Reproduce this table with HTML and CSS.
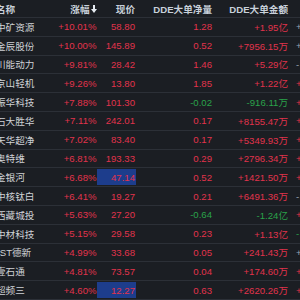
FILE: index.html
```html
<!DOCTYPE html>
<html lang="zh-CN">
<head>
<meta charset="utf-8">
<title>DDE</title>
<link rel="stylesheet" href="styles.css">
</head>
<body>
<div class="table">
  <div class="row head">
    <div class="c name">名称</div>
    <div class="c num">涨幅<svg class="arrow" viewBox="0 0 6 8" width="6" height="8"><path d="M2 0h2v4h2L3 8 0 4h2z" fill="#e6ecf2"/></svg></div>
    <div class="c num">现价</div>
    <div class="c num">DDE大单净量</div>
    <div class="c num">DDE大单金额</div>
    <div class="c more"></div>
  </div>
  <div class="row"><div class="c name">中矿资源</div><div class="c num up">+10.01%</div><div class="c num up">58.80</div><div class="c num up">1.28</div><div class="c num up">+1.95亿</div><div class="c more gr">+</div></div>
  <div class="row"><div class="c name">金辰股份</div><div class="c num up">+10.00%</div><div class="c num up">145.89</div><div class="c num up">0.52</div><div class="c num up">+7956.15万</div><div class="c more gr">+</div></div>
  <div class="row"><div class="c name">川能动力</div><div class="c num up">+9.81%</div><div class="c num up">28.42</div><div class="c num up">1.46</div><div class="c num up">+5.29亿</div><div class="c more gr">-</div></div>
  <div class="row"><div class="c name">京山轻机</div><div class="c num up">+9.26%</div><div class="c num up">13.80</div><div class="c num up">1.85</div><div class="c num up">+1.22亿</div><div class="c more up">+</div></div>
  <div class="row"><div class="c name">振华科技</div><div class="c num up">+7.88%</div><div class="c num up">101.30</div><div class="c num dn">-0.02</div><div class="c num dn">-916.11万</div><div class="c more up">+</div></div>
  <div class="row"><div class="c name">石大胜华</div><div class="c num up">+7.11%</div><div class="c num up">242.01</div><div class="c num up">0.17</div><div class="c num up">+8155.47万</div><div class="c more up">+</div></div>
  <div class="row"><div class="c name">天华超净</div><div class="c num up">+7.02%</div><div class="c num up">83.40</div><div class="c num up">0.17</div><div class="c num up">+5349.93万</div><div class="c more up">+</div></div>
  <div class="row"><div class="c name">奥特维</div><div class="c num up">+6.81%</div><div class="c num up">193.33</div><div class="c num up">0.29</div><div class="c num up">+2796.34万</div><div class="c more up">+</div></div>
  <div class="row"><div class="c name">金银河</div><div class="c num up">+6.68%</div><div class="c num up"><span class="hl">47.14</span></div><div class="c num up">0.52</div><div class="c num up">+1421.50万</div><div class="c more up">+</div></div>
  <div class="row"><div class="c name">中核钛白</div><div class="c num up">+6.41%</div><div class="c num up">19.27</div><div class="c num up">0.21</div><div class="c num up">+6491.36万</div><div class="c more gr">-</div></div>
  <div class="row"><div class="c name">西藏城投</div><div class="c num up">+5.63%</div><div class="c num up">27.20</div><div class="c num dn">-0.64</div><div class="c num dn">-1.24亿</div><div class="c more up">+</div></div>
  <div class="row"><div class="c name">中材科技</div><div class="c num up">+5.15%</div><div class="c num up">29.58</div><div class="c num up">0.23</div><div class="c num up">+1.13亿</div><div class="c more dn">-</div></div>
  <div class="row"><div class="c name">*ST德新</div><div class="c num up">+4.99%</div><div class="c num up">33.68</div><div class="c num up">0.05</div><div class="c num up">+241.43万</div><div class="c more gr">+</div></div>
  <div class="row"><div class="c name">壹石通</div><div class="c num up">+4.81%</div><div class="c num up">73.57</div><div class="c num up">0.04</div><div class="c num up">+174.60万</div><div class="c more up">+</div></div>
  <div class="row"><div class="c name">超频三</div><div class="c num up">+4.60%</div><div class="c num up"><span class="hl">12.27</span></div><div class="c num up">0.63</div><div class="c num up">+2620.26万</div><div class="c more up">+</div></div>
</div>
</body>
</html>
```
FILE: styles.css
```css
html, body {
  margin: 0;
  padding: 0;
  background: #1b1e23;
}
.table {
  width: 300px;
  height: 300px;
  overflow: hidden;
  font-family: "Liberation Sans", "Noto Sans CJK SC", sans-serif;
  font-size: 9.6px;
}
.row {
  display: grid;
  grid-template-columns: 60px 37px 38.5px 77px 76px 12px;
  height: 18.8px;
  box-sizing: border-box;
  border-bottom: 1px solid #2c3037;
  align-items: stretch;
}
.row.head {
  height: 18px;
  color: #c8d0da;
  font-weight: bold;
}
.c {
  display: flex;
  align-items: center;
  white-space: nowrap;
  overflow: visible;
}
.name {
  margin-left: -4px;
  color: #cfd2d6;
}
.head .name { color: #c8d0da; }
.num {
  justify-content: flex-end;
  padding-right: 0.5px;
}
.arrow {
  margin-left: 1px;
}
.more {
  padding-left: 7.5px;
}
.up { color: #e2334c; }
.dn { color: #2aa24a; }
.gr { color: #9aa6b6; }
.hl {
  display: flex;
  align-items: center;
  justify-content: flex-end;
  align-self: stretch;
  flex: 1;
  margin: 1px -0.5px 1px 0;
  padding-right: 0.5px;
  background: #1d3d8c;
}
```
